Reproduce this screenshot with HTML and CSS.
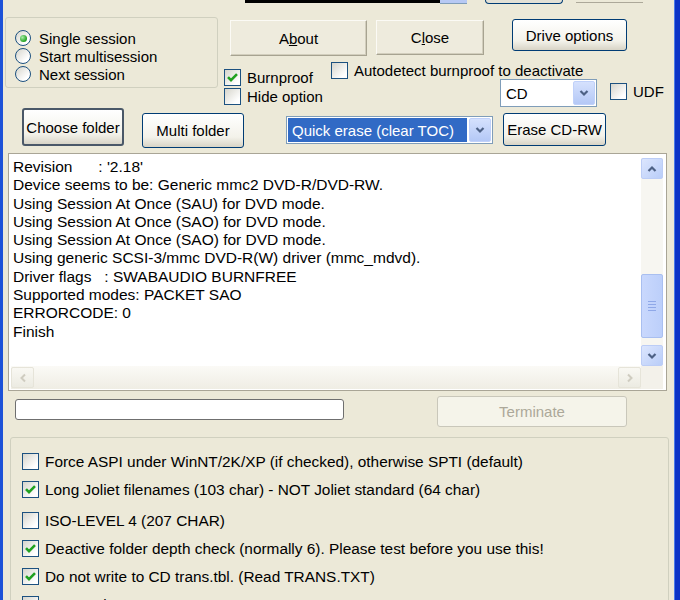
FILE: index.html
```html
<!DOCTYPE html>
<html lang="en">
<head>
    <meta charset="UTF-8">
    <title>Burner options</title>
    <link rel="stylesheet" href="styles.css">
</head>
<body>
<div class="window">
    <div class="frame-left"></div>
    <div class="client">

        <!-- bottom edges of the controls above the crop -->
        <div class="top-strip">
            <div class="strip-combo"></div>
            <div class="strip-arrow"></div>
            <div class="strip-btn"></div>
            <div class="strip-line"></div>
        </div>

        <div class="upper">
            <div class="session-box">
                <div class="radio-row"><span class="radio is-on"></span>Single session</div>
                <div class="radio-row"><span class="radio"></span>Start multisession</div>
                <div class="radio-row"><span class="radio"></span>Next session</div>
            </div>

            <div class="controls">
                <div class="btn-row">
                    <div class="classic-btn about">A<u>b</u>out</div>
                    <div class="classic-btn close">C<u>l</u>ose</div>
                    <div class="xp-btn drive">Drive options</div>
                </div>
                <div class="option-area">
                    <div class="option-col">
                        <div class="check-label burnproof">
                            <span class="check"><svg viewBox="0 0 15 15" width="15" height="15"><path d="M3 7.2 L6 10.2 L12 4.2" fill="none" stroke="#21a121" stroke-width="2.6"/></svg></span>
                            Burnproof
                        </div>
                        <div class="check-label hide-opt"><span class="check"></span>Hide option</div>
                    </div>
                    <div class="option-col2">
                        <div class="check-label autodetect"><span class="check"></span>Autodetect burnproof to deactivate</div>
                        <div class="media-row">
                            <div class="combo media">
                                <div class="combo-value">CD</div>
                                <div class="combo-arrow"><svg viewBox="0 0 14 14" width="14" height="14"><path d="M3.5 5 L7 8.5 L10.5 5" fill="none" stroke="#4d6185" stroke-width="2.2"/></svg></div>
                            </div>
                            <div class="check-label udf"><span class="check"></span>UDF</div>
                        </div>
                    </div>
                </div>
            </div>
        </div>

        <div class="folder-row">
            <div class="xp-btn choose">Choose folder</div>
            <div class="xp-btn multi">Multi folder</div>
            <div class="combo erase-mode">
                <div class="combo-value is-selected">Quick erase (clear TOC)</div>
                <div class="combo-arrow"><svg viewBox="0 0 14 14" width="14" height="14"><path d="M3.5 5 L7 8.5 L10.5 5" fill="none" stroke="#4d6185" stroke-width="2.2"/></svg></div>
            </div>
            <div class="xp-btn erase">Erase CD-RW</div>
        </div>

        <div class="log">
            <div class="log-text">Revision      : '2.18'
Device seems to be: Generic mmc2 DVD-R/DVD-RW.
Using Session At Once (SAU) for DVD mode.
Using Session At Once (SAO) for DVD mode.
Using Session At Once (SAO) for DVD mode.
Using generic SCSI-3/mmc DVD-R(W) driver (mmc_mdvd).
Driver flags   : SWABAUDIO BURNFREE
Supported modes: PACKET SAO
ERRORCODE: 0
Finish</div>
            <div class="vscroll">
                <div class="sb-btn"><svg viewBox="0 0 14 14" width="14" height="14"><path d="M3.5 9 L7 5.5 L10.5 9" fill="none" stroke="#4d6185" stroke-width="2.2"/></svg></div>
                <div class="sb-thumb"><span></span><span></span><span></span><span></span></div>
                <div class="sb-btn sb-down"><svg viewBox="0 0 14 14" width="14" height="14"><path d="M3.5 5 L7 8.5 L10.5 5" fill="none" stroke="#4d6185" stroke-width="2.2"/></svg></div>
            </div>
            <div class="hscroll">
                <div class="sb-btn is-off"><svg viewBox="0 0 14 14" width="14" height="14"><path d="M9 3.5 L5.5 7 L9 10.5" fill="none" stroke="#cfccc0" stroke-width="2"/></svg></div>
                <div class="sb-btn is-off"><svg viewBox="0 0 14 14" width="14" height="14"><path d="M5 3.5 L8.5 7 L5 10.5" fill="none" stroke="#cfccc0" stroke-width="2"/></svg></div>
            </div>
            <div class="sb-corner"></div>
        </div>

        <div class="progress-row">
            <div class="progress"></div>
            <div class="xp-btn terminate">Terminate</div>
        </div>

        <div class="options-box">
            <div class="check-label"><span class="check"></span>Force ASPI under WinNT/2K/XP (if checked), otherwise SPTI (default)</div>
            <div class="check-label">
                <span class="check"><svg viewBox="0 0 15 15" width="15" height="15"><path d="M3 7.2 L6 10.2 L12 4.2" fill="none" stroke="#21a121" stroke-width="2.6"/></svg></span>
                Long Joliet filenames (103 char) - NOT Joliet standard (64 char)
            </div>
            <div class="check-label gap-wide"><span class="check"></span>ISO-LEVEL 4 (207 CHAR)</div>
            <div class="check-label">
                <span class="check"><svg viewBox="0 0 15 15" width="15" height="15"><path d="M3 7.2 L6 10.2 L12 4.2" fill="none" stroke="#21a121" stroke-width="2.6"/></svg></span>
                Deactive folder depth check (normally 6). Please test before you use this!
            </div>
            <div class="check-label">
                <span class="check"><svg viewBox="0 0 15 15" width="15" height="15"><path d="M3 7.2 L6 10.2 L12 4.2" fill="none" stroke="#21a121" stroke-width="2.6"/></svg></span>
                Do not write to CD trans.tbl. (Read TRANS.TXT)
            </div>
            <div class="check-label"><span class="check"></span>Do not eject</div>
        </div>

    </div>
    <div class="frame-right"></div>
</div>
</body>
</html>
```

FILE: styles.css
```css
body {
    margin: 0;
    font-family: "Liberation Sans", Arial, sans-serif;
    font-size: 15px;
    color: #000;
    background-color: #ece9d8;
}
.window {
    display: flex;
    width: 680px;
    height: 600px;
    overflow: hidden;
}
.frame-left {
    flex: none;
    width: 3px;
    background-color: #1d52d8;
}
.frame-right {
    flex: none;
    width: 6px;
    background-color: #0b33c6;
    box-shadow: inset 1px 0 0 #4a7ae8;
}
.client {
    flex: 1;
    min-width: 0;
    display: flex;
    flex-direction: column;
    background-color: #ece9d8;
}
.client > div {
    flex: none;
}

/* strip at the top edge */
.top-strip {
    display: flex;
    align-items: flex-start;
    height: 5px;
    overflow: hidden;
}
.strip-combo {
    margin-left: 242px;
    width: 195px;
    height: 3px;
    background-color: #000;
}
.strip-arrow {
    width: 27px;
    height: 3px;
    background-color: #b7c9f4;
    border-bottom: 1px solid #7f9db9;
}
.strip-btn {
    margin-left: 18px;
    width: 78px;
    height: 4px;
    box-sizing: border-box;
    border: 1px solid #003c74;
    border-top: none;
    border-radius: 0 0 4px 4px;
    background-color: #e3e1d6;
}
.strip-line {
    margin-left: 13px;
    width: 67px;
    height: 2px;
    border-bottom: 1px solid #aca899;
}

/* session radios and top controls */
.upper {
    display: flex;
    align-items: flex-start;
}
.session-box {
    flex: none;
    margin: 12px 0 0 2px;
    width: 213px;
    height: 71px;
    box-sizing: border-box;
    border: 1px solid #d0d0bf;
    border-radius: 3px;
    padding: 11px 0 0 9px;
    display: flex;
    flex-direction: column;
}
.radio-row {
    display: flex;
    align-items: center;
    gap: 8px;
    height: 18px;
    white-space: nowrap;
}
.radio {
    flex: none;
    width: 16px;
    height: 16px;
    box-sizing: border-box;
    border: 1px solid #1c5180;
    border-radius: 50%;
    background: linear-gradient(135deg, #d6d5cc, #ffffff 75%);
    display: flex;
    align-items: center;
    justify-content: center;
}
.radio.is-on::after {
    content: "";
    width: 7px;
    height: 7px;
    border-radius: 50%;
    background: radial-gradient(circle at 35% 35%, #a6eda6, #21a121 70%);
}
.controls {
    flex: 1;
    margin-left: 6px;
    display: flex;
    flex-direction: column;
}
.btn-row {
    display: flex;
    align-items: flex-start;
    margin-top: 14px;
}
.option-area {
    display: flex;
}
.option-col {
    flex: none;
    width: 107px;
    display: flex;
    flex-direction: column;
}
.option-col2 {
    display: flex;
    flex-direction: column;
}
.burnproof {
    margin-top: 13px;
}
.hide-opt {
    margin-top: 2px;
}
.autodetect {
    margin-top: 6px;
    height: 16px;
}
.media-row {
    display: flex;
    align-items: flex-start;
}
.udf {
    margin: 4px 0 0 13px;
}

/* checkboxes */
.check-label {
    flex: none;
    display: flex;
    align-items: center;
    gap: 6px;
    height: 17px;
    white-space: nowrap;
}
.check {
    flex: none;
    width: 17px;
    height: 17px;
    box-sizing: border-box;
    border: 1px solid #1c5180;
    background: linear-gradient(135deg, #d6d5cc, #ffffff 80%);
    display: flex;
    align-items: center;
    justify-content: center;
}

/* buttons */
.classic-btn {
    flex: none;
    box-sizing: border-box;
    display: flex;
    align-items: center;
    justify-content: center;
    border: 1px solid;
    border-color: #fbfaf5 #a7a391 #a7a391 #fbfaf5;
    box-shadow: inset -1px -1px 0 #d2cebd;
    background-color: #eeebdd;
}
.about {
    margin: 1px 0 0 6px;
    width: 137px;
    height: 36px;
}
.close {
    margin: 1px 0 0 9px;
    width: 108px;
    height: 35px;
}
.xp-btn {
    flex: none;
    box-sizing: border-box;
    display: flex;
    align-items: center;
    justify-content: center;
    border: 1px solid #003c74;
    border-radius: 3px;
    background: linear-gradient(#ffffff, #f3f2ea 70%, #d8d4c6);
    white-space: nowrap;
}
.drive {
    margin-left: 28px;
    width: 115px;
    height: 32px;
}
.folder-row {
    display: flex;
    align-items: flex-start;
    margin-top: 1px;
    height: 40px;
}
.choose {
    margin-left: 19px;
    width: 102px;
    height: 38px;
    border-width: 2px;
    border-color: #4a5868;
}
.multi {
    margin: 5px 0 0 18px;
    width: 102px;
    height: 35px;
}
.erase {
    margin: 5px 0 0 10px;
    width: 103px;
    height: 33px;
}
.terminate {
    margin-left: 93px;
    width: 190px;
    height: 31px;
    border-color: #c9c7ba;
    background: #f5f4ea;
    color: #aca899;
}

/* combo boxes */
.combo {
    flex: none;
    box-sizing: border-box;
    display: flex;
    border: 1px solid #7f9db9;
    background-color: #fff;
    padding: 1px;
}
.media {
    margin-left: 169px;
    width: 97px;
    height: 28px;
}
.erase-mode {
    margin: 8px 0 0 42px;
    width: 207px;
    height: 28px;
}
.combo-value {
    flex: 1;
    display: flex;
    align-items: center;
    padding-left: 4px;
    white-space: nowrap;
}
.combo-value.is-selected {
    margin-right: 2px;
    background-color: #316ac5;
    color: #fff;
}
.combo-arrow {
    flex: none;
    width: 22px;
    box-sizing: border-box;
    border: 1px solid #c0d1fa;
    border-radius: 2px;
    background: linear-gradient(#d5e1fd, #b4c8f6);
    display: flex;
    align-items: center;
    justify-content: center;
}

/* log */
.log {
    margin: 5px 0 0 5px;
    width: 659px;
    height: 238px;
    box-sizing: border-box;
    border: 1px solid #a9a596;
    padding: 4px 3px 1px 2px;
    background-color: #fff;
    display: grid;
    grid-template-columns: 1fr 22px;
    grid-template-rows: 1fr 23px;
}
.log-text {
    padding-left: 2px;
    font-size: 15.5px;
    line-height: 18.3px;
    white-space: pre;
    overflow: hidden;
}
.vscroll {
    display: flex;
    flex-direction: column;
    background-color: #f7f6f1;
}
.sb-btn {
    flex: none;
    width: 22px;
    height: 21px;
    box-sizing: border-box;
    border: 1px solid #bccdf6;
    border-radius: 2px;
    background: linear-gradient(135deg, #dce6fe, #b9cdf8);
    display: flex;
    align-items: center;
    justify-content: center;
}
.sb-down {
    margin-top: auto;
}
.sb-thumb {
    margin-top: 95px;
    height: 64px;
    box-sizing: border-box;
    border: 1px solid #a9bff0;
    border-radius: 2px;
    background: linear-gradient(90deg, #c9d8fd, #bccffa);
    display: flex;
    flex-direction: column;
    align-items: center;
    justify-content: center;
    gap: 2px;
}
.sb-thumb span {
    width: 8px;
    height: 1px;
    background-color: #8fa8e8;
}
.hscroll {
    display: flex;
    justify-content: space-between;
    align-items: center;
    background: linear-gradient(#fbfaf6, #efede4);
}
.sb-btn.is-off {
    width: 23px;
    border-color: #e6e4d9;
    background: linear-gradient(#f9f8f3, #ecebe2);
}
.sb-corner {
    background-color: #f3f1ea;
}

/* progress */
.progress-row {
    display: flex;
    align-items: flex-start;
    margin-top: 5px;
    height: 31px;
}
.progress {
    flex: none;
    margin: 3px 0 0 12px;
    width: 329px;
    height: 21px;
    box-sizing: border-box;
    border: 1px solid #6f6f6f;
    border-radius: 3px;
    background-color: #fff;
}

/* lower options */
.options-box {
    margin: 10px 0 0 7px;
    width: 659px;
    height: 190px;
    box-sizing: border-box;
    border: 1px solid #d0d0bf;
    border-radius: 3px;
    padding: 15px 0 0 11px;
    display: flex;
    flex-direction: column;
    gap: 11px;
    font-size: 15.4px;
}
.options-box .gap-wide {
    margin-top: 3px;
}
```
